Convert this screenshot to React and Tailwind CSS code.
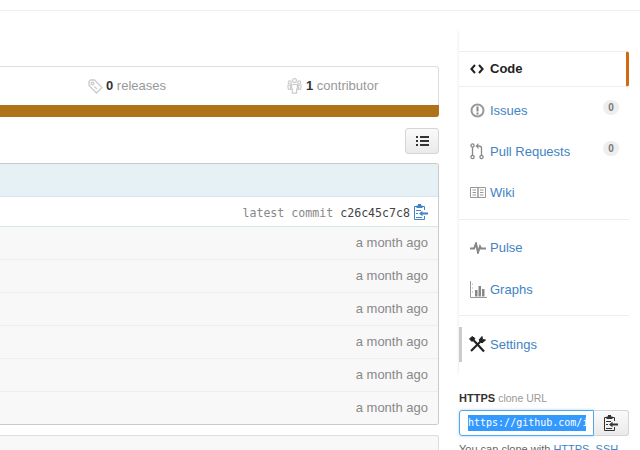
import React from "react";

const font = "font-['Liberation_Sans',Arial,sans-serif]";
const mono = "font-['DejaVu_Sans_Mono',monospace]";

function TagIcon() {
  return (
    <svg width="15" height="15" viewBox="0 0 15 15" fill="none" stroke="#ccc" strokeWidth="1.3">
      <path d="M1 2.5 L2.5 1 H6.5 L14 8.5 L8.5 14 L1 6.5 Z" />
      <circle cx="4.5" cy="4.5" r="1.4" />
      <path d="M6.5 7.5 L9 10" />
    </svg>
  );
}

function PeopleIcon() {
  return (
    <svg width="15" height="16" viewBox="0 0 15 16" fill="none" stroke="#ccc" strokeWidth="1.2">
      <circle cx="7.5" cy="2.6" r="2" />
      <circle cx="2.8" cy="4.4" r="1.5" />
      <circle cx="12.2" cy="4.4" r="1.5" />
      <path d="M4.6 6.5 H10.4 V11 H9.6 V15.2 H5.4 V11 H4.6 Z" />
      <path d="M1 7 H3.4 V11.5 H1.8 L1 10 Z" />
      <path d="M14 7 H11.6 V11.5 H13.2 L14 10 Z" />
    </svg>
  );
}

function ListIcon() {
  return (
    <svg width="13" height="10" viewBox="0 0 13 10" fill="#333">
      <rect x="0" y="0" width="2" height="2" />
      <rect x="4" y="0" width="9" height="2" />
      <rect x="0" y="4" width="2" height="2" />
      <rect x="4" y="4" width="9" height="2" />
      <rect x="0" y="8" width="2" height="2" />
      <rect x="4" y="8" width="9" height="2" />
    </svg>
  );
}

function ClipIcon({ color }) {
  return (
    <svg width="14" height="16" viewBox="0 0 14 16" fill="none">
      <path d="M10.5 6 V2.5 H0.5 V15.5 H10.5 V12" stroke={color} />
      <rect x="2.5" y="1.5" width="6" height="2.5" fill={color} />
      <rect x="4" y="0" width="3" height="2" fill={color} />
      <path d="M2 6.5 H7 M2 9.5 H4 M2 13.5 H8" stroke={color} />
      <path d="M5 9.5 L8.5 6.8 V8.5 H14 V10.5 H8.5 V12.2 Z" fill={color} />
    </svg>
  );
}

function CodeIcon() {
  return (
    <svg width="14" height="10" viewBox="0 0 14 10" fill="none" stroke="#222" strokeWidth="2">
      <path d="M5 1 L1.4 5 L5 9" />
      <path d="M9 1 L12.6 5 L9 9" />
    </svg>
  );
}

function IssueIcon() {
  return (
    <svg width="15" height="15" viewBox="0 0 15 15" fill="none">
      <circle cx="7.5" cy="7.5" r="6" stroke="#999" strokeWidth="2" />
      <rect x="6.5" y="3.5" width="2" height="5" fill="#888" />
      <rect x="6.5" y="9.5" width="2" height="2" fill="#888" />
    </svg>
  );
}

function PullIcon() {
  return (
    <svg width="14" height="17" viewBox="0 0 14 17" fill="none" stroke="#888" strokeWidth="1.3">
      <circle cx="2.5" cy="14" r="1.6" />
      <circle cx="11.5" cy="14" r="1.6" />
      <circle cx="2.5" cy="2.5" r="1.6" />
      <path d="M2.5 4 V12.4" />
      <path d="M11.5 12.4 V5 C11.5 3.5 10.5 3 8.5 3" />
      <path d="M8.5 0 V6 L5.5 3 Z" fill="#888" stroke="none" />
    </svg>
  );
}

function BookIcon() {
  return (
    <svg width="16" height="11" viewBox="0 0 16 11" fill="none" stroke="#999">
      <path d="M0.5 0.5 H15.5 V10.5 H0.5 Z" />
      <path d="M8 0.5 V10.5" strokeWidth="1.5" />
      <path d="M2.5 3 H6 M2.5 5.5 H6 M2.5 8 H6 M10 3 H13.5 M10 5.5 H13.5 M10 8 H13.5" />
    </svg>
  );
}

function PulseIcon() {
  return (
    <svg width="16" height="12" viewBox="0 0 16 12" fill="none" stroke="#888" strokeWidth="2">
      <path d="M0 6.5 H4 L6 1.5 L8 10.5 L10 4.5 L11 6.5 H16" />
    </svg>
  );
}

function GraphIcon() {
  return (
    <svg width="17" height="17" viewBox="0 0 17 17" fill="none">
      <path d="M0.5 0 V16.5 H17" stroke="#999" />
      <path d="M2 3 H3 M2 7 H3 M2 11 H3" stroke="#aaa" />
      <rect x="5" y="9" width="2.5" height="6.5" fill="#888" />
      <rect x="8.5" y="5" width="2.5" height="10.5" fill="#888" />
      <rect x="12" y="8" width="2.5" height="7.5" fill="#888" />
    </svg>
  );
}

function ToolsIcon() {
  return (
    <svg width="17" height="17" viewBox="0 0 17 17" fill="none" stroke="#222" strokeWidth="2.2">
      <path d="M3.5 3 L15 15.5" />
      <path d="M2 15 L12 5" />
      <path d="M10 4 L13 0.5 L13.5 3.5 L16.5 4 L13 7 Z" fill="#222" strokeWidth="1" />
      <path d="M0.5 3 L3 0.5 L6 2.5 L3 5.5 Z" fill="#222" strokeWidth="1" />
    </svg>
  );
}

function NavItem({ icon, label, count, active, settings }) {
  let state = "h-[35px] pl-[11px] text-[#4183c4]";
  if (active) state = "h-[36px] pl-[11px] bg-white border-y border-[#eee] border-r-[3px] border-r-[#d26911] rounded-r-[3px] font-bold text-[#222]";
  if (settings) state = "h-[35px] pl-[7px] border-l-[3px] border-[#ccc] text-[#4183c4]";
  return (
    <div className={"relative flex items-center text-[13px] " + state}>
      <span className={(settings ? "w-[21px]" : "w-[20px]") + " flex items-center justify-start shrink-0"}>{icon}</span>
      <span>{label}</span>
      {count !== undefined && (
        <span className="absolute right-[10px] top-[7px] w-[16px] h-[15px] rounded-full bg-[#eee] text-[#777] text-[10px] font-bold flex items-center justify-center">
          {count}
        </span>
      )}
    </div>
  );
}

const rows = [0, 1, 2, 3, 4, 5];

export default function App() {
  return (
    <div className={"w-[640px] h-[450px] overflow-hidden bg-white " + font}>
      <div className="h-[11px] border-b border-[#eee]" />
      <div className="flex">
        <div className="w-[439px] shrink-0 pt-[55px]">
          <div className="h-[51px] border border-l-0 border-[#ddd] rounded-r-[3px] relative flex">
            <div className="h-[38px] flex-1 flex items-center text-[13px] text-[#999]">
              <div className="ml-[88px] flex items-center gap-[3px]">
                <TagIcon />
                <span><b className="text-[#333]">0</b> releases</span>
              </div>
              <div className="ml-[121px] flex items-center gap-[4px]">
                <PeopleIcon />
                <span><b className="text-[#333]">1</b> contributor</span>
              </div>
            </div>
            <div className="absolute left-0 right-[-1px] bottom-[-1px] h-[12px] bg-[#b07219] rounded-br-[3px]" />
          </div>
          <div className="flex justify-end mt-[11px]">
            <div className="w-[34px] h-[26px] border border-[#d5d5d5] rounded-[3px] bg-gradient-to-b from-[#fafafa] to-[#eaeaea] flex items-center justify-center">
              <ListIcon />
            </div>
          </div>
          <div className="mt-[9px] border border-l-0 border-[#cacaca] rounded-r-[3px] overflow-hidden">
            <div className="h-[33px] bg-[#e6f1f6] border-b border-[#d8e6ec]" />
            <div className="h-[30px] bg-white border-b border-[#d8e6ec] flex items-center justify-end pr-[10px] gap-[4px]">
              <span className={mono + " text-[11.6px] text-[#888] pt-[5px]"}>
                latest commit <span className="text-[#444]">c26c45c7c8</span>
              </span>
              <ClipIcon color="#4183c4" />
            </div>
            {rows.map((r) => (
              <div
                key={r}
                className={
                  "bg-[#f8f8f8] flex items-center justify-end pr-[10px] text-[13px] text-[#888] " +
                  (r < 5 ? "h-[33px] border-b border-[#eee]" : "h-[32px]")
                }
              >
                a month ago
              </div>
            ))}
          </div>
          <div className="mt-[10px] h-[30px] bg-[#f8f8f8] border border-l-0 border-[#ddd] rounded-r-[3px]" />
        </div>

        <div className="w-[170px] ml-[20px] shrink-0 pt-[17px]">
          <div className="shadow-[-3px_0_3px_-3px_rgba(0,0,0,0.12)] pt-[23px]">
            <NavItem active icon={<CodeIcon />} label="Code" />
            <div className="pt-[6px]">
              <NavItem icon={<IssueIcon />} label="Issues" count={0} />
              <div className="h-[6px]" />
              <NavItem icon={<PullIcon />} label="Pull Requests" count={0} />
              <div className="h-[6px]" />
              <NavItem icon={<BookIcon />} label="Wiki" />
            </div>
            <div className="h-[1px] bg-[#eee] mt-[9px]" />
            <div className="pt-[10px]">
              <NavItem icon={<PulseIcon />} label="Pulse" />
              <div className="h-[7px]" />
              <NavItem icon={<GraphIcon />} label="Graphs" />
            </div>
            <div className="h-[1px] bg-[#eee] mt-[8px]" />
            <div className="pt-[11px] pb-[15px]">
              <NavItem settings icon={<ToolsIcon />} label="Settings" />
            </div>
          </div>
          <div className="text-[11px] text-[#999] mt-[14px] leading-[14px]">
            <b className="text-[#333]">HTTPS</b> <span className="text-[10.5px]">clone URL</span>
          </div>
          <div className="flex mt-[5px] h-[26px]">
            <div className="w-[135px] border border-[#51a7e8] rounded-l-[3px] flex items-center pl-[8px] overflow-hidden shadow-[0_0_3px_rgba(81,167,232,0.5)]">
              <span className={mono + " text-[10px] leading-[16px] whitespace-nowrap bg-[#3399ff] text-white overflow-hidden w-[118px] block"}>
                https://github.com/i
              </span>
            </div>
            <div className="w-[35px] border border-l-0 border-[#d5d5d5] rounded-r-[3px] bg-gradient-to-b from-[#fafafa] to-[#eaeaea] flex items-center justify-center">
              <ClipIcon color="#333" />
            </div>
          </div>
          <div className="text-[11px] text-[#666] mt-[6px] leading-[14px] whitespace-nowrap">
            You can clone with <span className="text-[#4183c4]">HTTPS</span>, <span className="text-[#4183c4]">SSH</span>,
          </div>
        </div>
      </div>
    </div>
  );
}
